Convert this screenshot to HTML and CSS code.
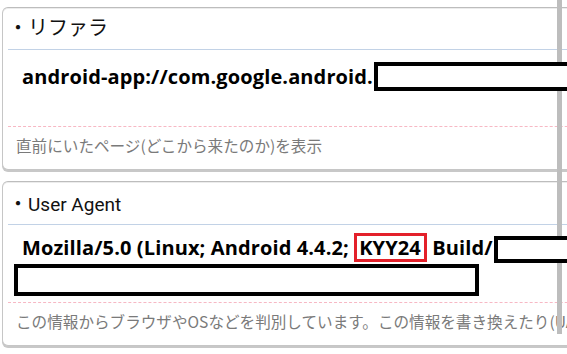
FILE: index.html
```html
<!DOCTYPE html>
<html lang="ja">
<head>
<meta charset="utf-8">
<link rel="stylesheet" href="styles.css">
</head>
<body>
<div class="page">
  <section class="card">
    <div class="card-head">・リファラ</div>
    <div class="card-body">
      <div class="value-line"><span class="value">android-app://com.google.android.</span><span class="redact redact-open"></span></div>
    </div>
    <div class="card-desc">直前にいたページ(どこから来たのか)を表示</div>
  </section>
  <section class="card card-ua">
    <div class="card-head"><span class="dot">・</span><span class="latin">User Agent</span></div>
    <div class="card-body">
      <div class="value-line"><span class="value">Mozilla/5.0 (Linux; Android 4.4.2; <span class="mark">KYY24</span> Build/</span><span class="redact redact-open redact-short"></span></div>
      <div class="redact redact-wide"></div>
    </div>
    <div class="card-desc">この情報からブラウザやOSなどを判別しています。この情報を書き換えたり(UA偽装)することもできます</div>
  </section>
  <div class="scrollbar"></div>
</div>
</body>
</html>
```
FILE: styles.css
```css
html, body {
  margin: 0;
  padding: 0;
  background: #fff;
  overflow: hidden;
}
.page {
  position: relative;
  width: 567px;
  height: 354px;
  overflow: hidden;
  padding-top: 7px;
  box-sizing: border-box;
  font-family: Roboto, "Noto Sans CJK JP", sans-serif;
  color: #111;
}
.card {
  width: 640px;
  margin-left: 2px;
  border: 1px solid #c6c6c6;
  border-top-color: #bdbdbd;
  border-radius: 6px;
  box-shadow: inset 0 1px 0 #ececec, 0 2px 0 #c8c8c8;
  background: #fff;
  margin-bottom: 11px;
}
.card-head {
  margin-left: 5px;
  height: 42px;
  box-sizing: border-box;
  padding-left: 0;
  padding-top: 7px;
  font-size: 20px;
  line-height: 26px;
  border-bottom: 1px solid #c2d2e6;
  white-space: nowrap;
}
.card-ua .card-head {
  height: 43px;
  padding-top: 9px;
}
.latin {
  font-size: 19px;
}
.card-body {
  margin-left: 5px;
  padding: 12px 0 35px 14px;
  border-bottom: 1px dashed #f7b8c4;
}
.card-ua .card-body {
  padding-top: 8px;
  padding-bottom: 6px;
}
.value-line {
  display: flex;
  align-items: center;
  height: 29px;
  font-family: "Open Sans", Roboto, sans-serif;
  font-size: 20px;
  font-weight: bold;
  letter-spacing: 0.12px;
  color: #000;
  white-space: nowrap;
}
.value {
  line-height: 29px;
}
.mark {
  display: inline-block;
  border: 3px solid #e3202a;
  padding: 0 3px 0 2px;
  line-height: 23px;
  position: relative;
  z-index: 2;
}
.redact {
  position: relative;
  z-index: 2;
  background: #fff;
  border: 4px solid #000;
  box-sizing: border-box;
}
.redact-open {
  display: inline-block;
  width: 260px;
  height: 29px;
  margin-left: 1px;
}
.redact-short {
  height: 27px;
  margin-top: 3px;
}
.redact-wide {
  width: 465px;
  height: 32px;
  margin-left: -8px;
  margin-top: 2px;
}
.card-desc {
  padding: 8px 0 14px 13px;
  font-family: "Noto Sans CJK JP", sans-serif;
  font-size: 15.6px;
  line-height: 20px;
  color: #7a7a7a;
  white-space: nowrap;
}
.scrollbar {
  position: absolute;
  left: 557px;
  top: 0;
  width: 5px;
  height: 334px;
  background: #bdbdbd;
  z-index: 1;
}
```
